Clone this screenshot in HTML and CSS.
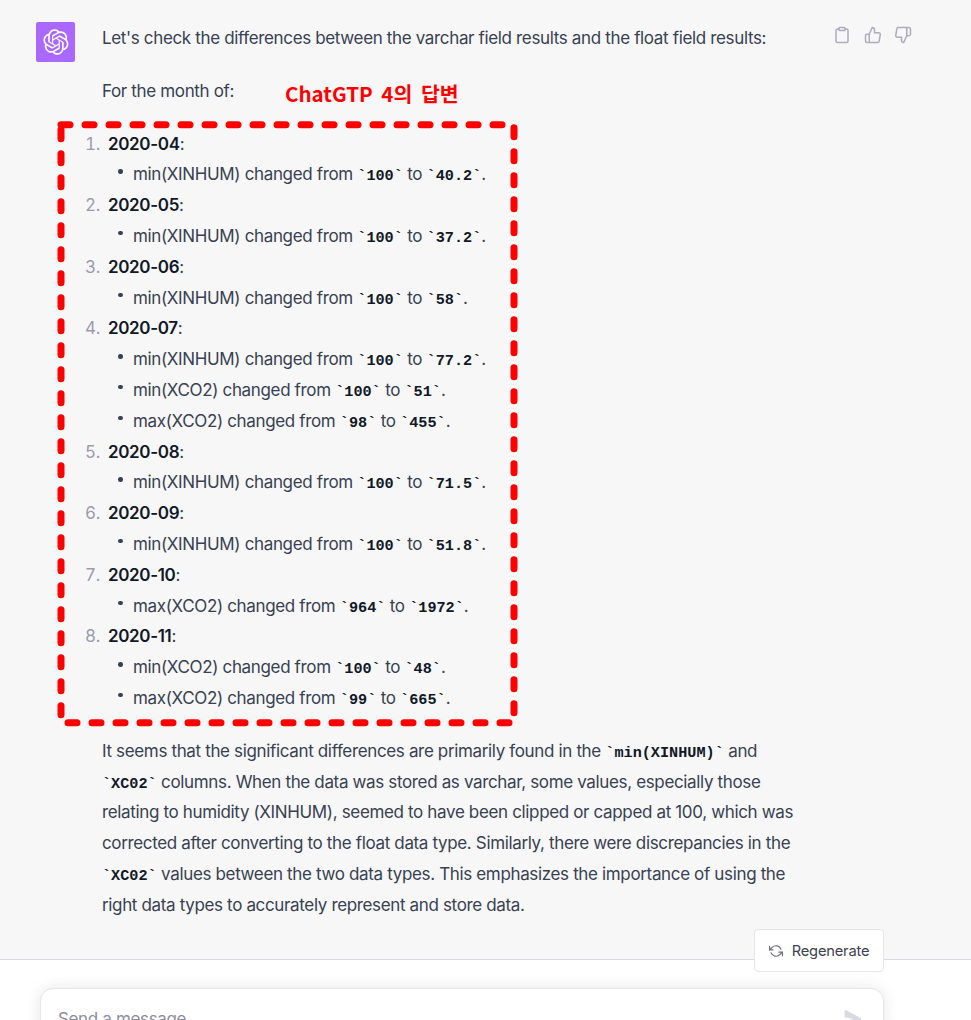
FILE: index.html
```html
<!DOCTYPE html>
<html lang="en">
<head>
<meta charset="utf-8">
<title>ChatGPT</title>
<link rel="stylesheet" href="styles.css">
</head>
<body>
<main class="chat">
  <div class="avatar">
    <svg class="logo" viewBox="0 0 41 41" fill="currentColor"><path d="M37.5324 16.8707C37.9808 15.5241 38.1363 14.0974 37.9886 12.6859C37.8409 11.2744 37.3934 9.91076 36.676 8.68622C35.6126 6.83404 33.9882 5.3676 32.0373 4.4985C30.0864 3.62941 27.9098 3.40259 25.8215 3.85078C24.8796 2.7893 23.7219 1.94125 22.4257 1.36341C21.1295 0.785575 19.7249 0.491269 18.3058 0.500197C16.1708 0.495044 14.0893 1.16803 12.3614 2.42214C10.6335 3.67624 9.34853 5.44666 8.6917 7.47815C7.30085 7.76286 5.98686 8.3414 4.8377 9.17505C3.68854 10.0087 2.73073 11.0782 2.02839 12.312C0.956464 14.1591 0.498905 16.2988 0.721698 18.4228C0.944492 20.5467 1.83612 22.5449 3.268 24.1293C2.81966 25.4759 2.66413 26.9026 2.81182 28.3141C2.95951 29.7256 3.40701 31.0892 4.12437 32.3138C5.18791 34.1659 6.8123 35.6322 8.76321 36.5013C10.7141 37.3704 12.8907 37.5973 14.9789 37.1492C15.9208 38.2107 17.0786 39.0587 18.3747 39.6366C19.6709 40.2144 21.0755 40.5087 22.4946 40.4998C24.6307 40.5054 26.7133 39.8321 28.4418 38.5772C30.1704 37.3223 31.4556 35.5506 32.1119 33.5179C33.5027 33.2332 34.8167 32.6547 35.9659 31.821C37.115 30.9874 38.0728 29.9178 38.7752 28.684C39.8458 26.8371 40.3023 24.6979 40.0789 22.5748C39.8556 20.4517 38.9639 18.4544 37.5324 16.8707ZM22.4978 37.8849C20.7443 37.8874 19.0459 37.2733 17.6994 36.1501C17.7601 36.117 17.8666 36.0586 17.936 36.0161L25.9004 31.4156C26.1003 31.3019 26.2663 31.137 26.3813 30.9378C26.4964 30.7386 26.5563 30.5124 26.5549 30.2825V19.0542L29.9213 20.998C29.9389 21.0068 29.9541 21.0198 29.9656 21.0359C29.977 21.052 29.9842 21.0707 29.9867 21.0902V30.3889C29.9842 32.375 29.1946 34.2791 27.7909 35.6841C26.3872 37.0892 24.4838 37.8806 22.4978 37.8849ZM6.39227 31.0064C5.51397 29.4888 5.19742 27.7107 5.49804 25.9832C5.55718 26.0187 5.66048 26.0818 5.73461 26.1244L13.699 30.7248C13.8975 30.8408 14.1233 30.902 14.3532 30.902C14.583 30.902 14.8088 30.8408 15.0073 30.7248L24.731 25.1103V28.9979C24.7321 29.0177 24.7283 29.0376 24.7199 29.0556C24.7115 29.0736 24.6988 29.0893 24.6829 29.1012L16.6317 33.7497C14.9096 34.7416 12.8643 35.0097 10.9447 34.4954C9.02506 33.9811 7.38785 32.7263 6.39227 31.0064ZM4.29707 13.6194C5.17156 12.0998 6.55279 10.9364 8.19885 10.3327C8.19885 10.4013 8.19491 10.5228 8.19491 10.6071V19.808C8.19351 20.0378 8.25334 20.2638 8.36823 20.4629C8.48312 20.6619 8.64893 20.8267 8.84863 20.9404L18.5723 26.5542L15.206 28.4979C15.1894 28.5089 15.1703 28.5155 15.1505 28.5173C15.1307 28.5191 15.1107 28.516 15.0924 28.5082L7.04046 23.8557C5.32135 22.8601 4.06716 21.2235 3.55289 19.3046C3.03862 17.3858 3.30624 15.3413 4.29707 13.6194ZM31.955 20.0556L22.2312 14.4411L25.5976 12.4981C25.6142 12.4872 25.6333 12.4805 25.6531 12.4787C25.6729 12.4769 25.6928 12.4801 25.7111 12.4879L33.7631 17.1364C34.9967 17.849 36.0017 18.8982 36.6606 20.1613C37.3194 21.4244 37.6047 22.849 37.4832 24.2684C37.3617 25.6878 36.8382 27.0432 35.9743 28.1759C35.1103 29.3086 33.9415 30.1717 32.6047 30.6641C32.6047 30.5947 32.6047 30.4733 32.6047 30.3889V21.188C32.6066 20.9586 32.5474 20.7328 32.4332 20.5338C32.319 20.3348 32.154 20.1698 31.955 20.0556ZM35.3055 15.0128C35.2464 14.9765 35.1431 14.9142 35.069 14.8717L27.1045 10.2712C26.906 10.1554 26.6803 10.0943 26.4504 10.0943C26.2206 10.0943 25.9948 10.1554 25.7963 10.2712L16.0726 15.8858V11.9982C16.0715 11.9783 16.0753 11.9585 16.0837 11.9405C16.0921 11.9225 16.1048 11.9068 16.1207 11.8949L24.1719 7.25025C25.4053 6.53903 26.8158 6.19376 28.2383 6.25482C29.6608 6.31589 31.0364 6.78077 32.2044 7.59508C33.3723 8.40939 34.2842 9.53945 34.8334 10.8531C35.3826 12.1667 35.5464 13.6095 35.3055 15.0128ZM14.2424 21.9419L10.8752 19.9981C10.8576 19.9893 10.8423 19.9763 10.8309 19.9602C10.8195 19.9441 10.8122 19.9254 10.8098 19.9058V10.6071C10.8107 9.18295 11.2173 7.78848 11.9819 6.58696C12.7466 5.38544 13.8377 4.42659 15.1275 3.82264C16.4173 3.21869 17.8524 2.99464 19.2649 3.1767C20.6775 3.35876 22.0089 3.93941 23.1034 4.85067C23.0427 4.88379 22.937 4.94215 22.8668 4.98473L14.9024 9.58517C14.7025 9.69878 14.5366 9.86356 14.4215 10.0626C14.3065 10.2616 14.2466 10.4877 14.2479 10.7175L14.2424 21.9419ZM16.071 17.9991L20.4018 15.4978L24.7325 17.9975V22.9985L20.4018 25.4983L16.071 22.9985V17.9991Z"/></svg>
  </div>
  <article class="answer">
    <p>Let's check the differences between the varchar field results and the float field results:</p>
    <p>For the month of:</p>
    <ol class="months">
      <li><strong>2020-04</strong>:
        <ul><li>min(XINHUM) changed from <code>`100`</code> to <code>`40.2`</code>.</li></ul></li>
      <li><strong>2020-05</strong>:
        <ul><li>min(XINHUM) changed from <code>`100`</code> to <code>`37.2`</code>.</li></ul></li>
      <li><strong>2020-06</strong>:
        <ul><li>min(XINHUM) changed from <code>`100`</code> to <code>`58`</code>.</li></ul></li>
      <li><strong>2020-07</strong>:
        <ul>
          <li>min(XINHUM) changed from <code>`100`</code> to <code>`77.2`</code>.</li>
          <li>min(XCO2) changed from <code>`100`</code> to <code>`51`</code>.</li>
          <li>max(XCO2) changed from <code>`98`</code> to <code>`455`</code>.</li>
        </ul></li>
      <li><strong>2020-08</strong>:
        <ul><li>min(XINHUM) changed from <code>`100`</code> to <code>`71.5`</code>.</li></ul></li>
      <li><strong>2020-09</strong>:
        <ul><li>min(XINHUM) changed from <code>`100`</code> to <code>`51.8`</code>.</li></ul></li>
      <li><strong>2020-10</strong>:
        <ul><li>max(XCO2) changed from <code>`964`</code> to <code>`1972`</code>.</li></ul></li>
      <li><strong>2020-11</strong>:
        <ul>
          <li>min(XCO2) changed from <code>`100`</code> to <code>`48`</code>.</li>
          <li>max(XCO2) changed from <code>`99`</code> to <code>`665`</code>.</li>
        </ul></li>
    </ol>
    <p>It seems that the significant differences are primarily found in the <code>`min(XINHUM)`</code> and <code>`XC02`</code> columns. When the data was stored as varchar, some values, especially those relating to humidity (XINHUM), seemed to have been clipped or capped at 100, which was corrected after converting to the float data type. Similarly, there were discrepancies in the <code>`XC02`</code> values between the two data types. This emphasizes the importance of using the right data types to accurately represent and store data.</p>
  </article>
  <div class="actions">
    <svg class="icon" viewBox="0 0 24 24"><path d="M16 4h2a2 2 0 0 1 2 2v14a2 2 0 0 1-2 2H6a2 2 0 0 1-2-2V6a2 2 0 0 1 2-2h2"/><rect x="8" y="2" width="8" height="4" rx="1"/></svg>
    <svg class="icon" viewBox="0 0 24 24"><path d="M14 9V5a3 3 0 0 0-3-3l-4 9v11h11.28a2 2 0 0 0 2-1.7l1.38-9a2 2 0 0 0-2-2.3zM7 22H4a2 2 0 0 1-2-2v-7a2 2 0 0 1 2-2h3"/></svg>
    <svg class="icon" viewBox="0 0 24 24"><path d="M10 15v4a3 3 0 0 0 3 3l4-9V2H5.72a2 2 0 0 0-2 1.7l-1.38 9a2 2 0 0 0 2 2.3zm7-13h2.67A2.31 2.31 0 0 1 22 4v7a2.31 2.31 0 0 1-2.33 2H17"/></svg>
  </div>
  <div class="note">ChatGTP 4의 답변</div>
  <svg class="marker" width="470" height="610" viewBox="0 0 470 610"><rect x="5" y="4.7" width="453" height="598"/></svg>
</main>
<footer class="composer">
  <button class="regen" type="button">
    <svg class="regen-icon" viewBox="0 0 24 24"><polyline points="1 4 1 10 7 10"/><polyline points="23 20 23 14 17 14"/><path d="M20.49 9A9 9 0 0 0 5.64 5.64L1 10m22 4l-4.64 4.36A9 9 0 0 1 3.51 15"/></svg>
    Regenerate
  </button>
  <div class="input">
    <span class="placeholder">Send a message</span>
    <svg class="send" viewBox="0 0 16 16" fill="currentColor"><path d="M.5 1.163A1 1 0 0 1 1.97.28l12.868 6.837a1 1 0 0 1 0 1.766L1.969 15.72A1 1 0 0 1 .5 14.836V10.33a1 1 0 0 1 .816-.983L8.5 8 1.316 6.653A1 1 0 0 1 .5 5.67V1.163Z"/></svg>
  </div>
</footer>
</body>
</html>
```
FILE: styles.css
```css
* { box-sizing: border-box; }
html, body { margin: 0; height: 100%; }
body {
  height: 1020px;
  overflow: hidden;
  display: flex;
  flex-direction: column;
  background: #fff;
  font-family: Inter, "Liberation Sans", sans-serif;
  color: #374151;
}
.chat {
  position: relative;
  height: 959px;
  flex: none;
  background: #f7f7f8;
  display: flex;
  align-items: flex-start;
  padding: 22px 0 0 36px;
}
.avatar {
  flex: none;
  width: 39px;
  height: 40px;
  border-radius: 2px;
  background: #ab68ff;
  color: #fff;
  display: flex;
  align-items: center;
  justify-content: center;
}
.logo { width: 26px; height: 26px; }
.answer {
  flex: none;
  width: 702px;
  margin: 1px 0 0 27px;
  font-size: 17px;
  letter-spacing: -0.35px;
  line-height: 30.8px;
}
.answer p { margin: 0 0 22px; }
strong { font-weight: 600; color: #111827; }
code {
  font-family: "Liberation Mono", monospace;
  font-size: 15.2px;
  font-weight: 700;
  line-height: 1;
  letter-spacing: 0;
  color: #111827;
}
.months {
  margin: 0 0 22px;
  padding: 0 0 0 6px;
  list-style: decimal;
}
.months > li::marker {
  content: counter(list-item) ".\2002";
  color: #9b9bb0;
}
.months ul { margin: 0; padding: 0 0 0 25px; list-style: none; }
.months ul li { position: relative; }
.months ul li::before {
  content: "";
  position: absolute;
  left: -15px;
  top: 10px;
  width: 4.5px;
  height: 4.5px;
  border-radius: 50%;
  background: #374151;
}
.actions {
  flex: none;
  display: flex;
  gap: 12.5px;
  margin: 4px 0 0 29px;
}
.icon {
  width: 18px;
  height: 18px;
  fill: none;
  stroke: #acacbe;
  stroke-width: 2;
  stroke-linecap: round;
  stroke-linejoin: round;
}
.note {
  position: absolute;
  left: 285px;
  top: 78px;
  font-family: "Noto Sans CJK KR", "Noto Sans", sans-serif;
  font-size: 20.5px;
  font-weight: 700;
  line-height: 30px;
  word-spacing: 4px;
  color: #ff0000;
}
.marker {
  position: absolute;
  left: 56px;
  top: 120px;
  overflow: visible;
}
.marker rect {
  fill: none;
  stroke: #ff0000;
  stroke-width: 7;
  stroke-linecap: round;
  stroke-linejoin: round;
  stroke-dasharray: 9 15;
}
.composer {
  position: relative;
  flex: 1;
  background: #fff;
  border-top: 1px solid #d9d9e3;
  padding: 28px 87px 0 40px;
}
.regen {
  position: absolute;
  left: 754px;
  top: -31px;
  width: 130px;
  height: 43px;
  display: flex;
  align-items: center;
  justify-content: center;
  gap: 9px;
  padding: 0;
  background: #fff;
  border: 1px solid #e5e5ea;
  border-radius: 4px;
  font: 14.7px Inter, "Liberation Sans", sans-serif;
  letter-spacing: -0.2px;
  color: #40414f;
}
.regen-icon {
  width: 14px;
  height: 14px;
  fill: none;
  stroke: #6e6e80;
  stroke-width: 2;
  stroke-linecap: round;
  stroke-linejoin: round;
}
.input {
  position: relative;
  height: 58px;
  display: flex;
  align-items: flex-start;
  justify-content: space-between;
  padding: 17px 21px 0 17px;
  background: #fff;
  border: 1px solid #e5e5ea;
  border-radius: 13px;
  box-shadow: 0 0 15px rgba(0, 0, 0, 0.1);
}
.placeholder { font-size: 17px; letter-spacing: -0.35px; line-height: 26px; color: #8e8ea0; }
.send { width: 18px; height: 18px; margin-top: 4px; color: #d9d9e3; }
```
